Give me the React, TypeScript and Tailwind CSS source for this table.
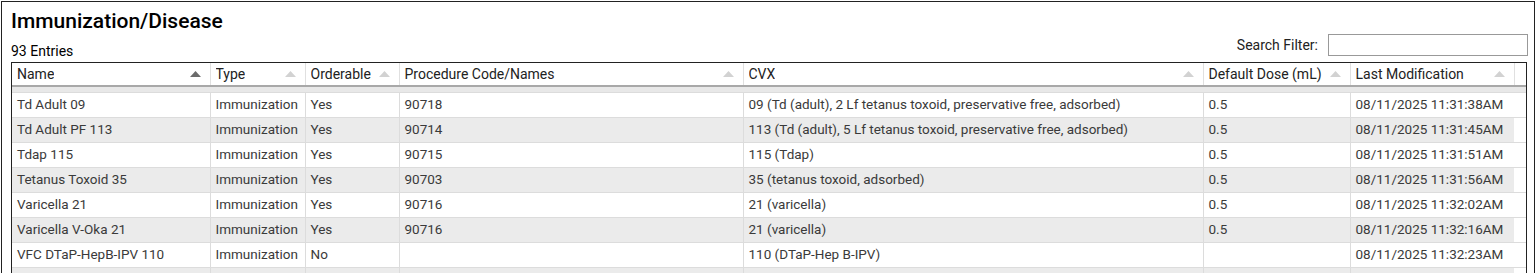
import React from 'react';

interface Row {
  name: string;
  type: string;
  orderable: string;
  procedure: string;
  cvx: string;
  dose: string;
  modified: string;
}

const rows: Row[] = [
  { name: 'Td Adult 09', type: 'Immunization', orderable: 'Yes', procedure: '90718', cvx: '09 (Td (adult), 2 Lf tetanus toxoid, preservative free, adsorbed)', dose: '0.5', modified: '08/11/2025 11:31:38AM' },
  { name: 'Td Adult PF 113', type: 'Immunization', orderable: 'Yes', procedure: '90714', cvx: '113 (Td (adult), 5 Lf tetanus toxoid, preservative free, adsorbed)', dose: '0.5', modified: '08/11/2025 11:31:45AM' },
  { name: 'Tdap 115', type: 'Immunization', orderable: 'Yes', procedure: '90715', cvx: '115 (Tdap)', dose: '0.5', modified: '08/11/2025 11:31:51AM' },
  { name: 'Tetanus Toxoid 35', type: 'Immunization', orderable: 'Yes', procedure: '90703', cvx: '35 (tetanus toxoid, adsorbed)', dose: '0.5', modified: '08/11/2025 11:31:56AM' },
  { name: 'Varicella 21', type: 'Immunization', orderable: 'Yes', procedure: '90716', cvx: '21 (varicella)', dose: '0.5', modified: '08/11/2025 11:32:02AM' },
  { name: 'Varicella V-Oka 21', type: 'Immunization', orderable: 'Yes', procedure: '90716', cvx: '21 (varicella)', dose: '0.5', modified: '08/11/2025 11:32:16AM' },
  { name: 'VFC DTaP-HepB-IPV 110', type: 'Immunization', orderable: 'No', procedure: '', cvx: '110 (DTaP-Hep B-IPV)', dose: '', modified: '08/11/2025 11:32:23AM' },
  { name: '', type: '', orderable: '', procedure: '', cvx: '', dose: '', modified: '' },
];

const columns = [
  { label: 'Name', width: 198, active: true },
  { label: 'Type', width: 95 },
  { label: 'Orderable', width: 94 },
  { label: 'Procedure Code/Names', width: 344 },
  { label: 'CVX', width: 460 },
  { label: 'Default Dose (mL)', width: 147 },
  { label: 'Last Modification', width: 164 },
];

const SortArrow = ({ active }: { active?: boolean }) => (
  <svg width="11" height="6" viewBox="0 0 11 6" className="shrink-0">
    <polygon points="5.5,0 11,6 0,6" fill={active ? '#6b6b6b' : '#d2d2d2'} />
  </svg>
);

const cell = 'overflow-hidden whitespace-nowrap border-r border-[#dcdcdc] pl-[5px] pr-[2px]';

const App: React.FC = () => {
  return (
    <div className="h-[273px] overflow-hidden bg-white font-['Roboto',sans-serif] text-[#3a3a3a]">
      <div className="mx-[1px] mt-[1px] h-[300px] border border-[#222] px-[9px]">
        <h1 className="pt-[6px] text-[21px] font-medium leading-[26px] text-black">Immunization/Disease</h1>

        <div className="flex h-[22px] items-end justify-between">
          <span className="mb-[-3px] text-[14px] leading-[16px] text-black">93 Entries</span>
          <div className="mr-[-3px] flex items-center gap-[10px]">
            <span className="text-[14px] text-[#222]">Search Filter:</span>
            <input className="h-[22px] w-[200px] border border-[#999] bg-white px-1 text-[13px] outline-none" />
          </div>
        </div>

        {/* table */}
        <div className="mt-[6px] mr-[-2px] border border-[#222]">
          <table className="w-full table-fixed border-collapse text-[13.5px]">
            <colgroup>
              {columns.map((c) => (
                <col key={c.label} style={{ width: c.width }} />
              ))}
              <col />
            </colgroup>
            <thead>
              <tr className="h-[23px] border-b-2 border-[#a8a8a8] text-[14px] text-[#222]">
                {columns.map((c) => (
                  <th key={c.label} className="border-r border-[#e0e0e0] px-[5px] text-left font-normal">
                    <div className="flex items-center justify-between pr-[4px]">
                      <span className="truncate">{c.label}</span>
                      <SortArrow active={c.active} />
                    </div>
                  </th>
                ))}
                <th />
              </tr>
            </thead>
            <tbody>
              <tr className="h-[6px] bg-[#e8e8e8]">
                <td colSpan={8} />
              </tr>
              {rows.map((r, i) => (
                <tr key={i} className={`h-[25px] border-t border-[#dcdcdc] ${i % 2 === 1 ? 'bg-[#ebebeb]' : 'bg-white'}`}>
                  <td className={cell}>{r.name}</td>
                  <td className={cell}>{r.type}</td>
                  <td className={cell}>{r.orderable}</td>
                  <td className={cell}>{r.procedure}</td>
                  <td className={cell}>{r.cvx}</td>
                  <td className={cell}>{r.dose}</td>
                  <td className="overflow-hidden whitespace-nowrap pl-[5px]">{r.modified}</td>
                  <td className="bg-white" />
                </tr>
              ))}
            </tbody>
          </table>
        </div>
      </div>
    </div>
  );
};

export default App;
